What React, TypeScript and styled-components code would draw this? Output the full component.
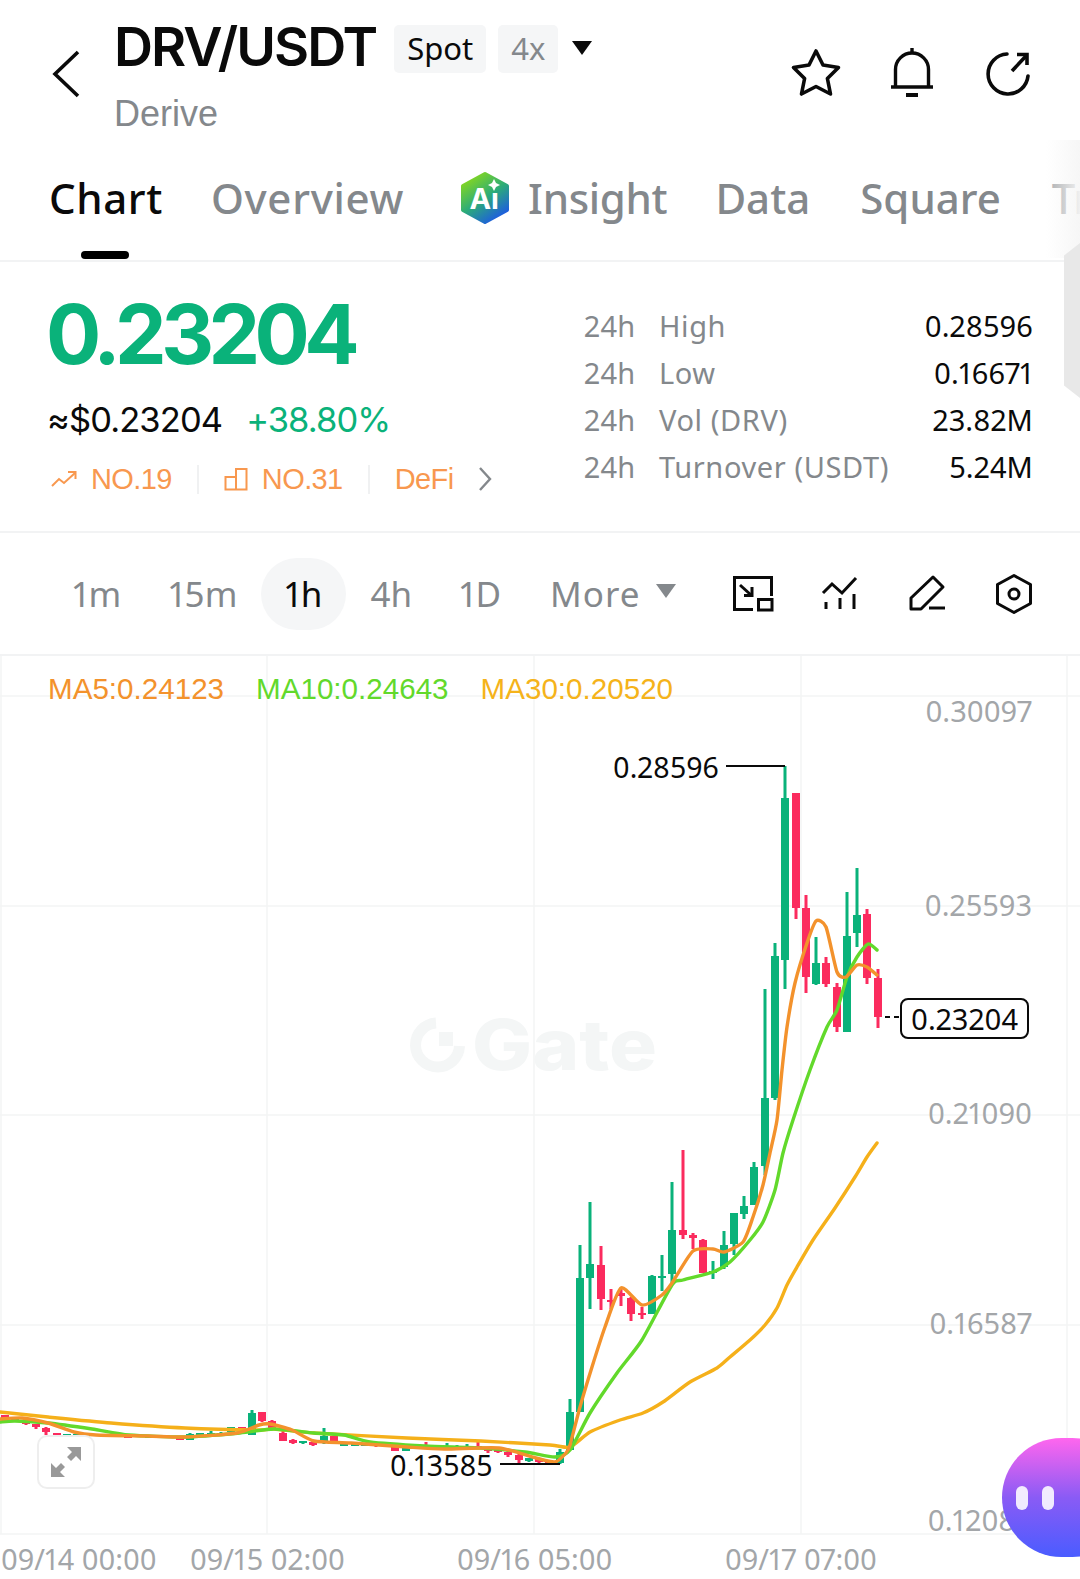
import styled, { createGlobalStyle } from 'styled-components';

const INK = '#0a0a0a';
const GRAY = '#84888c';
const AXIS = '#a3a6a9';
const GREEN = '#0ab27a';
const RED = '#fb2b5e';
const ORANGE = '#f8984f';

const SANS = '"Noto Sans", sans-serif';
const HELV = '"Liberation Sans", Arial, sans-serif';
const INTER = 'Inter, "Liberation Sans", sans-serif';

type Candle = [number, number, number, number, number, 'g' | 'r'];

// x, wick top, body top, body bottom, wick bottom, colour
const CANDLES: Candle[] = [
  [5, 1415, 1415, 1419, 1420, 'r'],
  [15, 1418, 1418, 1421, 1422, 'g'],
  [26, 1421, 1422, 1424, 1425, 'r'],
  [36, 1424, 1424, 1427, 1429, 'r'],
  [46, 1427, 1428, 1432, 1435, 'r'],
  [57, 1433, 1433, 1436, 1436, 'r'],
  [67, 1434, 1434, 1436, 1437, 'g'],
  [77, 1434, 1434, 1436, 1437, 'g'],
  [88, 1434, 1434, 1436, 1437, 'g'],
  [128, 1435, 1436, 1438, 1438, 'r'],
  [149, 1435, 1436, 1437, 1438, 'g'],
  [159, 1436, 1436, 1438, 1438, 'r'],
  [180, 1437, 1437, 1440, 1440, 'r'],
  [190, 1433, 1434, 1440, 1440, 'g'],
  [200, 1433, 1433, 1437, 1437, 'g'],
  [211, 1431, 1433, 1436, 1437, 'g'],
  [221, 1432, 1433, 1435, 1436, 'g'],
  [231, 1427, 1427, 1432, 1433, 'g'],
  [242, 1427, 1427, 1432, 1433, 'r'],
  [252, 1410, 1413, 1435, 1435, 'g'],
  [262, 1412, 1412, 1421, 1422, 'r'],
  [272, 1420, 1421, 1428, 1429, 'r'],
  [283, 1431, 1433, 1441, 1441, 'r'],
  [293, 1439, 1440, 1443, 1444, 'r'],
  [303, 1441, 1441, 1443, 1444, 'g'],
  [313, 1441, 1442, 1445, 1446, 'r'],
  [324, 1428, 1436, 1443, 1444, 'g'],
  [334, 1434, 1436, 1444, 1444, 'r'],
  [344, 1443, 1443, 1446, 1446, 'g'],
  [355, 1443, 1443, 1446, 1446, 'g'],
  [365, 1443, 1443, 1446, 1446, 'g'],
  [376, 1444, 1444, 1446, 1447, 'r'],
  [395, 1446, 1447, 1451, 1451, 'r'],
  [406, 1447, 1448, 1451, 1451, 'g'],
  [426, 1442, 1446, 1448, 1449, 'r'],
  [447, 1443, 1446, 1448, 1449, 'g'],
  [457, 1445, 1446, 1448, 1449, 'g'],
  [467, 1444, 1446, 1448, 1449, 'g'],
  [478, 1441, 1446, 1448, 1449, 'r'],
  [488, 1447, 1448, 1451, 1453, 'r'],
  [498, 1448, 1449, 1452, 1453, 'r'],
  [508, 1451, 1452, 1455, 1457, 'r'],
  [519, 1454, 1455, 1460, 1463, 'r'],
  [529, 1458, 1458, 1461, 1462, 'g'],
  [539, 1459, 1459, 1462, 1463, 'r'],
  [549, 1460, 1460, 1463, 1464, 'r'],
  [560, 1449, 1452, 1463, 1464, 'g'],
  [570, 1399, 1412, 1450, 1450, 'g'],
  [580, 1245, 1278, 1412, 1412, 'g'],
  [590, 1202, 1264, 1278, 1309, 'g'],
  [601, 1246, 1265, 1299, 1310, 'r'],
  [611, 1289, 1300, 1302, 1309, 'r'],
  [621, 1288, 1293, 1296, 1306, 'r'],
  [631, 1297, 1298, 1314, 1321, 'r'],
  [642, 1307, 1313, 1314, 1319, 'r'],
  [652, 1275, 1276, 1314, 1314, 'g'],
  [662, 1255, 1276, 1277, 1291, 'g'],
  [672, 1182, 1230, 1274, 1283, 'g'],
  [683, 1150, 1230, 1235, 1239, 'r'],
  [693, 1233, 1235, 1238, 1249, 'r'],
  [703, 1239, 1240, 1273, 1273, 'r'],
  [713, 1261, 1271, 1273, 1279, 'g'],
  [724, 1231, 1245, 1267, 1269, 'g'],
  [734, 1213, 1213, 1244, 1255, 'g'],
  [744, 1196, 1206, 1214, 1219, 'g'],
  [754, 1162, 1167, 1205, 1205, 'g'],
  [765, 989, 1098, 1166, 1175, 'g'],
  [775, 943, 956, 1098, 1100, 'g'],
  [785, 766, 798, 960, 989, 'g'],
  [796, 793, 793, 908, 919, 'r'],
  [806, 895, 908, 977, 993, 'r'],
  [816, 937, 963, 984, 985, 'g'],
  [826, 957, 963, 984, 987, 'r'],
  [837, 983, 987, 1027, 1032, 'r'],
  [847, 892, 936, 1032, 1032, 'g'],
  [857, 868, 915, 933, 947, 'g'],
  [867, 909, 914, 978, 984, 'r'],
  [878, 969, 978, 1017, 1028, 'r'],
];

type Pt = [number, number];

const MA5: Pt[] = [
  [0, 1419], [22, 1418], [48, 1423], [74, 1432], [96, 1435], [148, 1436], [185, 1437], [237, 1433],
  [259, 1425], [270, 1424], [292, 1430], [314, 1441], [351, 1443], [407, 1447], [444, 1449], [499, 1448],
  [536, 1458], [555, 1462], [566, 1453], [570, 1445], [580, 1407], [592, 1367], [605, 1327], [621, 1288],
  [642, 1305], [662, 1295], [672, 1283], [693, 1251], [713, 1249], [724, 1252], [743, 1242], [753, 1217],
  [763, 1185], [770, 1153], [777, 1120], [782, 1070], [787, 1027], [795, 983], [807, 943], [816, 921],
  [826, 927], [837, 972], [846, 977], [857, 965], [867, 967], [877, 975],
];

const MA10: Pt[] = [
  [0, 1422], [15, 1421], [48, 1423], [92, 1429], [129, 1435], [185, 1437], [240, 1433], [274, 1429],
  [314, 1433], [344, 1435], [370, 1442], [425, 1446], [481, 1448], [525, 1452], [555, 1457], [570, 1450],
  [590, 1413], [617, 1373], [642, 1340], [672, 1285], [683, 1280], [713, 1272], [730, 1262], [750, 1240],
  [763, 1222], [775, 1190], [783, 1153], [793, 1120], [810, 1070], [827, 1027], [837, 1010], [847, 977],
  [857, 957], [868, 944], [877, 950],
];

const MA30: Pt[] = [
  [0, 1412], [48, 1417], [111, 1423], [185, 1428], [259, 1430], [274, 1429], [314, 1433], [407, 1438],
  [481, 1441], [550, 1445], [570, 1447], [590, 1432], [620, 1420], [643, 1413], [663, 1402], [690, 1382],
  [717, 1368], [730, 1357], [750, 1340], [765, 1325], [777, 1308], [787, 1285], [797, 1267], [813, 1240],
  [835, 1208], [855, 1177], [867, 1157], [877, 1143],
];

const smooth = (p: Pt[]) => {
  let d = `M${p[0][0]} ${p[0][1]}`;
  for (let i = 0; i < p.length - 1; i++) {
    const a = p[Math.max(i - 1, 0)];
    const b = p[i];
    const c = p[i + 1];
    const e = p[Math.min(i + 2, p.length - 1)];
    d += `C${b[0] + (c[0] - a[0]) / 9} ${b[1] + (c[1] - a[1]) / 9} ${c[0] - (e[0] - b[0]) / 9} ${c[1] - (e[1] - b[1]) / 9} ${c[0]} ${c[1]}`;
  }
  return d;
};

const App = () => {
  return (
    <Page>
      <GlobalStyle />
      <Header>
        <BackIcon width="32" height="52" viewBox="0 0 32 52">
          <path d="M28 4L5 26L28 48" fill="none" stroke={INK} strokeWidth="3.6" />
        </BackIcon>
        <TitleColumn>
          <TitleRow>
            <Title>DRV/USDT</Title>
            <Badge>Spot</Badge>
            <Badge $muted>4x</Badge>
            <Caret $color={INK} $gap={2} $lift={1} />
          </TitleRow>
          <Subtitle>Derive</Subtitle>
        </TitleColumn>
        <HeaderActions>
          <svg width="52" height="52" viewBox="0 0 52 52" fill="none" stroke={INK} strokeWidth="3.6" strokeLinejoin="round">
            <path d="M26 4L33 18L48.5 20.5L37.4 31.5L40.5 47L26 39.5L11.5 47L14.6 31.5L3.5 20.5L19 18Z" />
          </svg>
          <svg width="52" height="52" viewBox="0 0 52 52" fill="none" stroke={INK} strokeWidth="3.4">
            <path d="M9.5 40V22.5a16.5 16.5 0 0 1 33 0V40" />
            <path d="M5 40H47" />
            <path d="M26 1V6" />
            <path d="M20 48H32" strokeWidth="4" />
          </svg>
          <svg width="52" height="52" viewBox="0 0 52 52" fill="none" stroke={INK} strokeWidth="3.6">
            <path d="M25 7A20 20 0 1 0 46 29" strokeLinecap="round" />
            <path d="M30 24L44 9" />
            <path d="M35 7.5H45V18" />
          </svg>
        </HeaderActions>
      </Header>

      <TabBar>
        <Tab $active $spacing={0.6}>Chart</Tab>
        <Tab $spacing={0.7}>Overview</Tab>
        <InsightTab $spacing={-0.3}>
          <svg width="50" height="56" viewBox="0 0 50 56">
            <defs>
              <linearGradient id="aiHex" x1="0.15" y1="0.05" x2="0.75" y2="1">
                <stop offset="0" stopColor="#86d81e" />
                <stop offset="0.5" stopColor="#2cac78" />
                <stop offset="1" stopColor="#1c58e6" />
              </linearGradient>
            </defs>
            <path d="M25 4L47 16V40L25 52L3 40V16Z" fill="url(#aiHex)" stroke="url(#aiHex)" strokeWidth="4" strokeLinejoin="round" />
            <text x="24" y="39" fontFamily={INTER} fontSize="29" fontWeight="700" fill="#fff" textAnchor="middle">
              Aı
            </text>
            <path d="M34 9L36 13L40 15L36 17L34 21L32 17L28 15L32 13Z" fill="#fff" />
          </svg>
          Insight
        </InsightTab>
        <Tab>Data</Tab>
        <Tab $nudge={2}>Square</Tab>
        <Tab $nudge={3}>Trade</Tab>
      </TabBar>
      <TabFade />
      <SideHandle />

      <Ticker>
        <PriceColumn>
          <Price>0.23204</Price>
          <QuoteRow>
            <FiatValue>≈$0.23204</FiatValue>
            <Change>+38.80%</Change>
          </QuoteRow>
          <RankRow>
            <Rank>
              <svg width="26" height="18" viewBox="0 0 26 18" fill="none" stroke={ORANGE} strokeWidth="2">
                <path d="M1 16L8 9L13 13L24 3" />
                <path d="M17 2H24.5V9" />
              </svg>
              NO.19
            </Rank>
            <RankDivider />
            <Rank>
              <svg width="24" height="24" viewBox="0 0 24 24" fill="none" stroke={ORANGE} strokeWidth="2">
                <path d="M1.5 22.5V10H12V22.5ZM12 10V2H22.5V22.5H12" />
              </svg>
              NO.31
            </Rank>
            <RankDivider />
            <Rank>DeFi</Rank>
            <MoreChevron width="14" height="26" viewBox="0 0 14 26">
              <path d="M2 2L12 13L2 24" fill="none" stroke={GRAY} strokeWidth="2.4" />
            </MoreChevron>
          </RankRow>
        </PriceColumn>
        <StatColumn>
          <StatRow>
            <StatPeriod>24h</StatPeriod>
            <StatName>High</StatName>
            <StatValue>0.28596</StatValue>
          </StatRow>
          <StatRow>
            <StatPeriod>24h</StatPeriod>
            <StatName>Low</StatName>
            <StatValue>0.16671</StatValue>
          </StatRow>
          <StatRow>
            <StatPeriod>24h</StatPeriod>
            <StatName>Vol (DRV)</StatName>
            <StatValue>23.82M</StatValue>
          </StatRow>
          <StatRow>
            <StatPeriod>24h</StatPeriod>
            <StatName>Turnover (USDT)</StatName>
            <StatValue>5.24M</StatValue>
          </StatRow>
        </StatColumn>
      </Ticker>

      <Toolbar>
        <Interval>1m</Interval>
        <Interval>15m</Interval>
        <Interval $active>1h</Interval>
        <Interval>4h</Interval>
        <Interval>1D</Interval>
        <Interval $wide>
          More
          <Caret $color={GRAY} $gap={15} $lift={3} />
        </Interval>
        <ToolIcons>
          <svg width="44" height="44" viewBox="0 0 44 44" fill="none" stroke={INK} strokeWidth="3">
            <path d="M22 37.5H3.5V5.5H40.5V24" />
            <rect x="27.5" y="27.5" width="13.5" height="10.5" />
            <path d="M9 13L20 23" />
            <path d="M13 23.5H21V15" />
          </svg>
          <svg width="44" height="44" viewBox="0 0 44 44" fill="none" stroke={INK} strokeWidth="3">
            <path d="M5 21L14 12L24 21L38 6" />
            <path d="M8 30V37M22 26V37M36 22V37" />
          </svg>
          <svg width="44" height="44" viewBox="0 0 44 44" fill="none" stroke={INK} strokeWidth="3" strokeLinejoin="round">
            <path d="M28 5L38 15L16 37H6V26Z" />
            <path d="M24 36H40" />
          </svg>
          <svg width="44" height="44" viewBox="0 0 44 44" fill="none" stroke={INK} strokeWidth="3" strokeLinejoin="round">
            <path d="M22 3.5L38.5 12.5V31.5L22 40.5L5.5 31.5V12.5Z" />
            <circle cx="22" cy="22" r="5" />
          </svg>
        </ToolIcons>
      </Toolbar>

      <ChartPanel>
        <ChartCanvas viewBox="0 656 1080 923">
          {[696, 906, 1115, 1325, 1534].map((y) => (
            <line key={y} x1="0" x2="1080" y1={y} y2={y} stroke="#f3f4f5" strokeWidth="1.5" />
          ))}
          {[1, 267, 534, 801, 1067].map((x) => (
            <line key={x} x1={x} x2={x} y1="656" y2="1534" stroke="#f3f4f5" strokeWidth="1.5" />
          ))}

          <path d="M436 1023A22 22 0 1 0 459.5 1046" fill="none" stroke="#f4f6f6" strokeWidth="11" />
          <rect x="439" y="1032" width="14" height="14" fill="#f4f6f6" />
          <text x="472" y="1070" fontFamily={INTER} fontSize="70" fontWeight="800" fill="#f4f6f6" textLength="185" lengthAdjust="spacingAndGlyphs">
            Gate
          </text>

          {CANDLES.map(([x, top, bodyTop, bodyBottom, bottom, kind]) => (
            <g key={x} fill={kind === 'g' ? GREEN : RED}>
              <rect x={x - 1.5} y={top} width="3" height={bottom - top} />
              <rect x={x - 4} y={bodyTop} width="8" height={Math.max(bodyBottom - bodyTop, 2)} />
            </g>
          ))}

          <g fill="none" strokeWidth="3.4" strokeLinejoin="round" strokeLinecap="round">
            <path d={smooth(MA30)} stroke="#f5b01a" />
            <path d={smooth(MA10)} stroke="#62d92b" />
            <path d={smooth(MA5)} stroke="#f3922c" />
          </g>

          <path d="M726 766H785" stroke={INK} strokeWidth="2" />
          <path d="M500 1464H560" stroke={INK} strokeWidth="2" />
          <path d="M885 1017H900" stroke={INK} strokeWidth="2" strokeDasharray="5 4" />
        </ChartCanvas>

        <Legend>
          <LegendItem $color="#f3922c">MA5:0.24123</LegendItem>
          <LegendItem $color="#62d92b">MA10:0.24643</LegendItem>
          <LegendItem $color="#f5b31a">MA30:0.20520</LegendItem>
        </Legend>

        <AxisPrice $top={35}>0.30097</AxisPrice>
        <AxisPrice $top={229}>0.25593</AxisPrice>
        <AxisPrice $top={437}>0.21090</AxisPrice>
        <AxisPrice $top={647}>0.16587</AxisPrice>
        <AxisPrice $top={844}>0.12084</AxisPrice>

        <Marker $left={613} $top={91}>0.28596</Marker>
        <Marker $left={390} $top={789}>0.13585</Marker>
        <LastPrice>0.23204</LastPrice>

        <ExpandButton>
          <svg width="30" height="30" viewBox="0 0 30 30" fill="#999">
            <path d="M0 30V16L5 21L10 16L14 20L9 25L14 30Z" />
            <path d="M30 0V14L25 9L20 14L16 10L21 5L16 0Z" />
          </svg>
        </ExpandButton>

        <AxisTime $left={1}>09/14 00:00</AxisTime>
        <AxisTime $left={190}>09/15 02:00</AxisTime>
        <AxisTime $left={457}>09/16 05:00</AxisTime>
        <AxisTime $left={725}>09/17 07:00</AxisTime>

        <Assistant>
          <AssistantEye />
          <AssistantEye />
        </Assistant>
      </ChartPanel>
    </Page>
  );
};

const GlobalStyle = createGlobalStyle`
  html, body {
    margin: 0;
    padding: 0;
    background: #fff;
  }
  * {
    box-sizing: border-box;
  }
`;

const Page = styled.div`
  position: relative;
  width: 1080px;
  height: 1579px;
  overflow: hidden;
  background: #fff;
  color: ${INK};
  font-family: ${SANS};
  font-variant-numeric: proportional-nums;
`;

const Header = styled.header`
  display: flex;
  align-items: flex-start;
  height: 140px;
  padding: 25px 46px 0 50px;
`;

const BackIcon = styled.svg`
  flex: none;
  margin-top: 23px;
`;

const TitleColumn = styled.div`
  margin-left: 32px;
`;

const TitleRow = styled.div`
  display: flex;
  align-items: center;
  height: 48px;
`;

const Title = styled.h1`
  margin: -4px 18px 0 0;
  font-family: ${INTER};
  font-size: 54px;
  font-weight: 600;
  letter-spacing: -2px;
  line-height: 48px;
`;

const Badge = styled.span<{ $muted?: boolean }>`
  display: flex;
  align-items: center;
  height: 48px;
  margin-right: 12px;
  padding: 0 13px 3px;
  border-radius: 5px;
  background: #f5f6f7;
  color: ${(p) => (p.$muted ? GRAY : INK)};
  font-size: 31px;
`;

const Caret = styled.span<{ $color: string; $gap: number; $lift: number }>`
  display: inline-block;
  width: 0;
  height: 0;
  margin-left: ${(p) => p.$gap}px;
  border-left: 10px solid transparent;
  border-right: 10px solid transparent;
  border-top: 14px solid ${(p) => p.$color};
  transform: translateY(-${(p) => p.$lift}px);
`;

const Subtitle = styled.div`
  margin-top: 19px;
  color: ${GRAY};
  font-family: ${HELV};
  font-size: 36px;
  line-height: 44px;
`;

const HeaderActions = styled.div`
  display: flex;
  gap: 44px;
  margin-left: auto;
  margin-top: 22px;
`;

const TabBar = styled.nav`
  display: flex;
  align-items: center;
  gap: 48px;
  height: 122px;
  padding: 0 0 5px 49px;
  border-bottom: 2px solid #f2f3f4;
  white-space: nowrap;
`;

const Tab = styled.span<{ $active?: boolean; $spacing?: number; $nudge?: number }>`
  position: relative;
  flex: none;
  margin-left: ${(p) => p.$nudge ?? 0}px;
  color: ${(p) => (p.$active ? INK : GRAY)};
  font-size: 42px;
  font-weight: 500;
  letter-spacing: ${(p) => p.$spacing ?? 0}px;
  line-height: 56px;

  ${(p) =>
    p.$active &&
    `
    &::after {
      content: '';
      position: absolute;
      left: 32px;
      bottom: -33px;
      width: 48px;
      height: 8px;
      border-radius: 4px;
      background: #000;
    }
  `}
`;

const InsightTab = styled(Tab)`
  display: flex;
  align-items: center;
  gap: 18px;
  margin-left: 8px;
`;

const TabFade = styled.div`
  position: absolute;
  top: 140px;
  right: 0;
  width: 34px;
  height: 118px;
  background: linear-gradient(90deg, rgba(255, 255, 255, 0.3), rgba(246, 246, 246, 0.95));
`;

const SideHandle = styled.div`
  position: absolute;
  top: 243px;
  right: 0;
  width: 16px;
  height: 155px;
  background: #e8e8e8;
  clip-path: polygon(100% 0, 100% 100%, 0 92%, 0 8%);
`;

const Ticker = styled.section`
  display: flex;
  justify-content: space-between;
  height: 271px;
  border-bottom: 2px solid #f2f3f4;
  padding: 0 47px 0 48px;
`;

const PriceColumn = styled.div`
  padding-top: 33px;
`;

const Price = styled.div`
  margin-left: -2px;
  color: ${GREEN};
  font-family: ${INTER};
  font-size: 82px;
  font-weight: 700;
  letter-spacing: -5.6px;
  line-height: 80px;
`;

const QuoteRow = styled.div`
  display: flex;
  align-items: center;
  gap: 24px;
  height: 48px;
  margin-top: 20px;
  margin-left: -1px;
  font-family: ${INTER};
  font-size: 34.5px;
  letter-spacing: -0.9px;
`;

const FiatValue = styled.span`
  color: ${INK};
`;

const Change = styled.span`
  color: ${GREEN};
`;

const RankRow = styled.div`
  display: flex;
  align-items: center;
  height: 36px;
  margin-top: 18px;
  padding-left: 3px;
`;

const Rank = styled.span`
  display: flex;
  align-items: center;
  gap: 14px;
  color: ${ORANGE};
  font-family: ${HELV};
  font-size: 29px;
  letter-spacing: -0.6px;
`;

const RankDivider = styled.span`
  width: 2px;
  height: 29px;
  margin: 0 25px;
  background: #f0f1f2;
`;

const MoreChevron = styled.svg`
  margin-left: 24px;
`;

const StatColumn = styled.div`
  width: 449px;
  padding-top: 40px;
`;

const StatRow = styled.div`
  display: flex;
  align-items: center;
  height: 47px;
  font-size: 29px;
`;

const StatPeriod = styled.span`
  width: 75px;
  color: ${GRAY};
  letter-spacing: 0.3px;
`;

const StatName = styled.span`
  color: ${GRAY};
  letter-spacing: 0.6px;
`;

const StatValue = styled.span`
  margin-left: auto;
  color: ${INK};
  letter-spacing: 0.1px;
`;

const Toolbar = styled.div`
  display: flex;
  align-items: center;
  height: 123px;
  padding: 0 44px 0 49px;
  border-bottom: 2px solid #f2f3f4;
`;

const Interval = styled.span<{ $active?: boolean; $wide?: boolean }>`
  display: flex;
  align-items: center;
  height: 72px;
  margin-left: ${(p) => (p.$wide ? '1px' : '0')};
  padding: 0 24px;
  border-radius: 36px;
  background: ${(p) => (p.$active ? '#f5f6f7' : 'transparent')};
  color: ${(p) => (p.$active ? INK : GRAY)};
  font-size: 35px;
  letter-spacing: ${(p) => (p.$wide ? '1px' : '0')};
`;

const ToolIcons = styled.div`
  display: flex;
  gap: 43px;
  margin-left: auto;
`;

const ChartPanel = styled.section`
  position: relative;
  height: 923px;
`;

const ChartCanvas = styled.svg`
  position: absolute;
  inset: 0;
  width: 1080px;
  height: 923px;
`;

const Legend = styled.div`
  position: absolute;
  top: 15px;
  left: 48px;
  display: flex;
  gap: 32px;
  font-family: ${HELV};
  font-size: 29.6px;
  line-height: 36px;
`;

const LegendItem = styled.span<{ $color: string }>`
  color: ${(p) => p.$color};
`;

const AxisPrice = styled.span<{ $top: number }>`
  position: absolute;
  top: ${(p) => p.$top}px;
  right: 48px;
  color: ${AXIS};
  font-size: 29px;
  line-height: 40px;
`;

const Marker = styled.span<{ $left: number; $top: number }>`
  position: absolute;
  top: ${(p) => p.$top}px;
  left: ${(p) => p.$left}px;
  font-size: 28.5px;
  line-height: 40px;
`;

const LastPrice = styled.span`
  position: absolute;
  top: 342px;
  left: 900px;
  display: flex;
  align-items: center;
  justify-content: center;
  width: 129px;
  height: 41px;
  border: 2px solid ${INK};
  border-radius: 8px;
  background: #fff;
  font-size: 29px;
  line-height: 36px;
`;

const ExpandButton = styled.div`
  position: absolute;
  top: 779px;
  left: 37px;
  display: flex;
  align-items: center;
  justify-content: center;
  width: 58px;
  height: 54px;
  border: 2px solid #eeeeee;
  border-radius: 10px;
  background: rgba(255, 255, 255, 0.7);
`;

const AxisTime = styled.span<{ $left: number }>`
  position: absolute;
  top: 883px;
  left: ${(p) => p.$left}px;
  color: ${AXIS};
  font-size: 28.8px;
  line-height: 40px;
`;

const Assistant = styled.div`
  position: absolute;
  top: 782px;
  left: 1002px;
  display: flex;
  align-items: center;
  gap: 14px;
  width: 130px;
  height: 119px;
  padding-left: 14px;
  border-radius: 60px;
  background: linear-gradient(180deg, #ff66ee 0%, #8a5bf5 50%, #4a5cff 100%);
`;

const AssistantEye = styled.span`
  width: 12px;
  height: 24px;
  border-radius: 6px;
  background: rgba(255, 255, 255, 0.88);
`;

export default App;
